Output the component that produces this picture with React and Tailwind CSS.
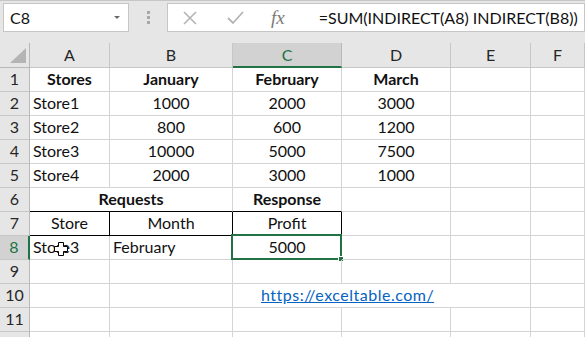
import React from 'react';

const cols = ['A', 'B', 'C', 'D', 'E', 'F'];

const rows = [
  { n: 1, cells: [['Stores', 'c b'], ['January', 'c b'], ['February', 'c b'], ['March', 'c b'], [''], ['']] },
  { n: 2, cells: [['Store1', 'l'], ['1000', 'c'], ['2000', 'c'], ['3000', 'c'], [''], ['']] },
  { n: 3, cells: [['Store2', 'l'], ['800', 'c'], ['600', 'c'], ['1200', 'c'], [''], ['']] },
  { n: 4, cells: [['Store3', 'l'], ['10000', 'c'], ['5000', 'c'], ['7500', 'c'], [''], ['']] },
  { n: 5, cells: [['Store4', 'l'], ['2000', 'c'], ['3000', 'c'], ['1000', 'c'], [''], ['']] },
];

function Cell({ text = '', align = 'c', bold = false, className = '', children }) {
  return (
    <div
      className={`relative h-[24px] border-r border-b border-[#d4d4d4] flex items-end pb-[1px] text-[16px] leading-[22px] text-[#111] whitespace-nowrap ${
        align === 'l' ? 'justify-start pl-[3px]' : 'justify-center'
      } ${bold ? 'font-bold' : ''} ${className}`}
    >
      {text}
      {children}
    </div>
  );
}

function RowHead({ n, active }) {
  return (
    <div
      className={`h-[24px] border-b flex items-end justify-center pb-[1px] text-[16px] leading-[22px] ${
        active
          ? 'bg-[#d2d2d2] text-[#217346] border-[#c6c6c6] border-r-2 border-r-[#217346]'
          : 'bg-[#e6e6e6] text-[#262626] border-[#c6c6c6] border-r border-r-[#b8b8b8]'
      }`}
    >
      {n}
    </div>
  );
}

function Cursor() {
  return (
    <svg className="absolute left-[23px] top-[5px]" width="16" height="16" viewBox="0 0 16 16">
      <path
        d="M5.5 1.5h5v4h4v5h-4v4h-5v-4h-4v-5h4z"
        fill="#fff"
        stroke="#000"
        strokeWidth="1"
      />
    </svg>
  );
}

export default function App() {
  return (
    <div className="w-[585px] h-[337px] bg-white overflow-hidden" style={{ fontFamily: 'Lato, "Open Sans", sans-serif' }}>
      {/* formula bar */}
      <div className="h-[43px] bg-[#e6e6e6] border-t border-[#c6c6c6]">
        <div className="flex items-start pt-[2px]">
          <div className="shrink-0 ml-[3px] w-[126px] h-[29px] bg-white border border-[#c6c6c6] flex items-center justify-between pl-[6px] pr-[8px]">
            <span className="text-[16px] text-[#111]">C8</span>
            <span className="w-0 h-0 border-l-[3px] border-r-[3px] border-t-[3px] border-l-transparent border-r-transparent border-t-[#6a6a6a]" />
          </div>
          <div className="shrink-0 w-[38px] h-[29px] flex flex-col items-center justify-center gap-[2px]">
            <span className="w-[3px] h-[3px] bg-[#a8a8a8]" />
            <span className="w-[3px] h-[3px] bg-[#a8a8a8]" />
            <span className="w-[3px] h-[3px] bg-[#a8a8a8]" />
          </div>
          <div className="flex-1 min-w-0 overflow-hidden h-[29px] bg-white border border-[#c6c6c6] flex items-center">
            <svg className="shrink-0 ml-[14px]" width="16" height="16" viewBox="0 0 16 16">
              <path d="M2 2l12 12M14 2L2 14" stroke="#b4b4b4" strokeWidth="1.6" fill="none" />
            </svg>
            <svg className="shrink-0 ml-[29px]" width="17" height="14" viewBox="0 0 17 14">
              <path d="M1 7l5 5L16 1" stroke="#b4b4b4" strokeWidth="1.8" fill="none" />
            </svg>
            <span
              className="shrink-0 ml-[27px] italic text-[19px] text-[#7a7a7a] leading-none"
              style={{ fontFamily: '"Liberation Serif", serif' }}
            >
              fx
            </span>
            <span className="ml-[34px] text-[16px] text-[#111] whitespace-nowrap">=SUM(INDIRECT(A8) INDIRECT(B8))</span>
          </div>
        </div>
      </div>

      {/* grid */}
      <div className="grid grid-cols-[30px_80px_123px_109px_109px_80px_1fr]">
        {/* column headers */}
        <div className="h-[25px] bg-[#e6e6e6] border-r border-b border-[#b8b8b8] relative">
          <svg className="absolute left-[10px] top-[5px]" width="16" height="15" viewBox="0 0 16 15">
            <path d="M16 0V15H0z" fill="#b4b4b4" />
          </svg>
        </div>
        {cols.map((c) => (
          <div
            key={c}
            className={`h-[25px] flex items-center justify-center text-[16px] ${
              c === 'C'
                ? 'bg-[#d2d2d2] text-[#217346] border-r border-[#b8b8b8] border-b-2 border-b-[#217346]'
                : 'bg-[#e6e6e6] text-[#262626] border-r border-b border-[#c6c6c6]'
            }`}
          >
            {c}
          </div>
        ))}

        {rows.map((r) => (
          <React.Fragment key={r.n}>
            <RowHead n={r.n} />
            {r.cells.map(([t, s = ''], i) => (
              <Cell key={i} text={t} align={s.includes('l') ? 'l' : 'c'} bold={s.includes('b')} />
            ))}
          </React.Fragment>
        ))}

        {/* row 6 */}
        <RowHead n={6} />
        <Cell text="Requests" bold className="col-span-2 border-b-black" />
        <Cell text="Response" bold className="border-b-black" />
        <Cell />
        <Cell />
        <Cell />

        {/* row 7 */}
        <RowHead n={7} />
        <Cell text="Store" className="border-r-black border-b-black" />
        <Cell text="Month" className="border-r-black border-b-black" />
        <Cell text="Profit" className="border-r-black border-b-black" />
        <Cell />
        <Cell />
        <Cell />

        {/* row 8 */}
        <RowHead n={8} active />
        <Cell text="Store3" align="l">
          <Cursor />
        </Cell>
        <Cell text="February" align="l" />
        <Cell text="5000">
          <div className="absolute left-[-2px] top-[-2px] right-[-1px] bottom-[-1px] border-2 border-[#217346] pointer-events-none" />
          <div className="absolute right-[-3px] bottom-[-3px] w-[6px] h-[6px] bg-[#217346] border border-white" />
        </Cell>
        <Cell />
        <Cell />
        <Cell />

        {/* row 9 */}
        <RowHead n={9} />
        {cols.map((c) => (
          <Cell key={c} />
        ))}

        {/* row 10 */}
        <RowHead n={10} />
        <Cell />
        <Cell />
        <div className="relative h-[24px] border-b border-[#d4d4d4] col-span-2 flex items-end pb-[1px] pl-[28px] text-[16px] leading-[22px] whitespace-nowrap">
          <span className="text-[#0563c1] underline tracking-[0.5px]">https://exceltable.com/</span>
        </div>
        <Cell />
        <Cell />

        {/* row 11 */}
        <RowHead n={11} />
        {cols.map((c) => (
          <Cell key={c} />
        ))}

        {/* row 12, only its top shows */}
        <RowHead n="" />
        {cols.map((c) => (
          <Cell key={c} />
        ))}
      </div>
    </div>
  );
}
